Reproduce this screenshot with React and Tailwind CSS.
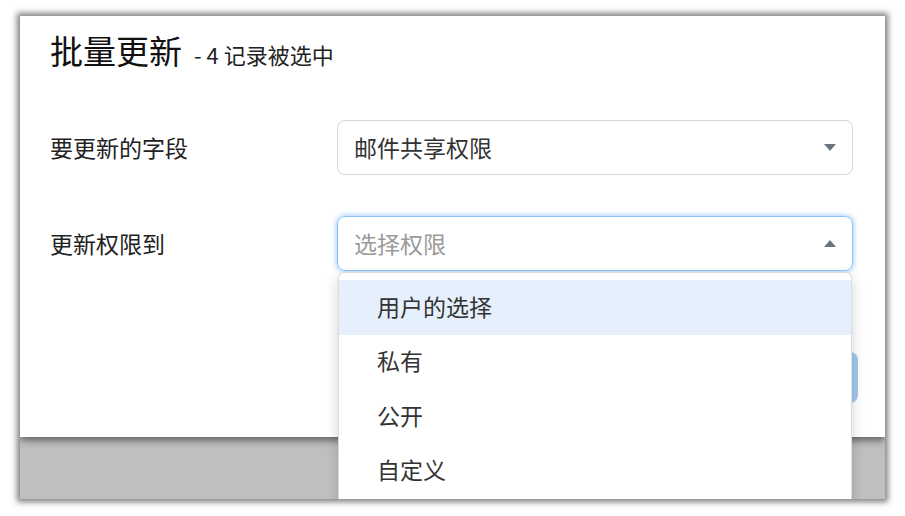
const font = { fontFamily: '"Noto Sans CJK SC", "Noto Sans", sans-serif' };

const options = ['用户的选择', '私有', '公开', '自定义'];

function Caret({ up }) {
  return (
    <svg className="w-3 h-[7px] text-[#6b7280]" viewBox="0 0 12 7" fill="currentColor">
      {up ? <path d="M0 7L6 0l6 7z" /> : <path d="M0 0h12L6 7z" />}
    </svg>
  );
}

export default function App() {
  return (
    <div className="w-[905px] h-[516px] bg-white pt-4 pl-5 overflow-hidden" style={font}>
      {/* screenshot frame */}
      <div className="relative w-[865px] h-[483px] bg-[#c0c0c0] overflow-hidden shadow-[0_0_6px_3px_rgba(0,0,0,0.5)] flex flex-col">
        {/* Modal */}
        <div className="relative z-10 h-[421px] bg-white px-[30px] shadow-[0_3px_8px_rgba(0,0,0,0.55)] text-[#222]">
          <div className="pt-[14px] h-14 flex items-baseline">
            <span className="text-[33px] leading-10 text-[#111]">批量更新</span>
            <span className="ml-3 text-[22px] text-[#222]">- 4 记录被选中</span>
          </div>

          <div className="mt-12 flex items-center">
            <span className="w-[287px] text-[23px]">要更新的字段</span>
            <div className="w-[516px] h-[55px] border border-[#d4d7dc] rounded-lg flex items-center justify-between pl-4 pr-4">
              <span className="text-[23px] text-[#333]">邮件共享权限</span>
              <Caret />
            </div>
          </div>

          <div className="mt-[41px] flex items-center">
            <span className="w-[287px] text-[23px]">更新权限到</span>
            <div className="w-[516px] h-[55px] border border-[#8cc0f7] rounded-lg flex items-center justify-between pl-4 pr-4 shadow-[0_0_5px_1px_rgba(96,165,250,0.55)]">
              <span className="text-[23px] text-[#9a9a9a]">选择权限</span>
              <Caret up />
            </div>
          </div>

          <div className="mt-[81px] flex justify-end mr-[-3px]">
            <button className="h-[51px] w-[110px] rounded-lg bg-[#a3c8ee]" />
          </div>
        </div>

        {/* Dropdown menu */}
        <div className="absolute z-20 left-[318px] top-[256px] w-[514px] h-[260px] bg-white border-x border-t border-[#dcdcdc] rounded-t-md pt-[7px] shadow-[0_6px_14px_rgba(0,0,0,0.18)]">
          {options.map((o, i) => (
            <div
              key={o}
              className={`h-[54.6px] flex items-center pl-[38px] pb-[3px] text-[23px] text-[#333] ${i === 0 ? 'bg-[#e5f0fc]' : ''}`}
            >
              {o}
            </div>
          ))}
        </div>
      </div>
    </div>
  );
}
